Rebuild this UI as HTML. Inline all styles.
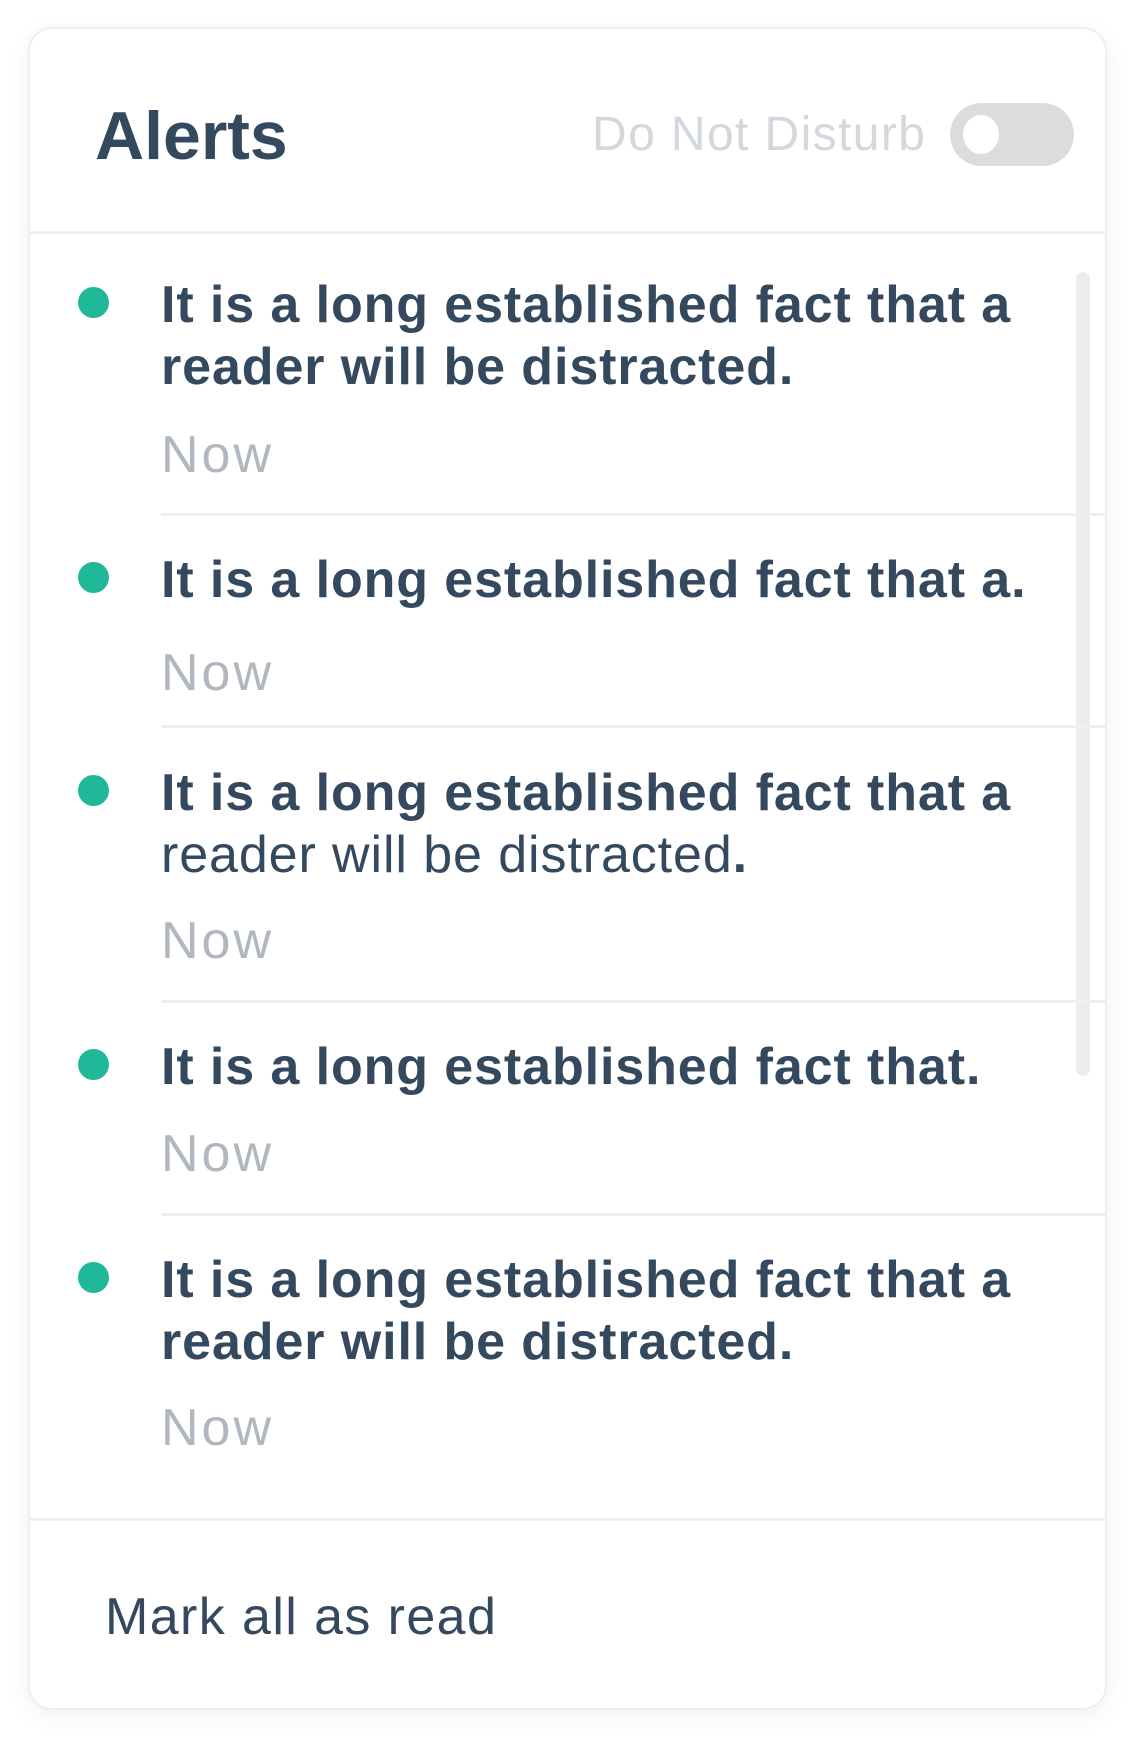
<!DOCTYPE html>
<html><head><meta charset="utf-8"><style>
*{margin:0;padding:0;box-sizing:border-box}
body{width:1134px;height:1737px;background:#fff;position:relative;overflow:hidden;font-family:"Liberation Sans",sans-serif;color:#34495e}
.card{position:absolute;left:28px;top:27px;width:1079px;height:1683px;border:2px solid #efefef;border-radius:24px;background:#fff;box-shadow:0 6px 24px rgba(0,0,0,0.06)}
.t{position:absolute;white-space:nowrap;line-height:1}
.b{font-size:52px;font-weight:bold;left:161px;letter-spacing:0.9px}
.r{font-size:52px;font-weight:normal}
.now{font-size:52px;color:#b0b7bf;left:161px;letter-spacing:3px}
.dot{position:absolute;left:78px;width:31px;height:31px;border-radius:50%;background:#1fb899}
.hr{position:absolute;height:3px;background:#efefef}
</style></head><body>
<div class="card"></div>
<div class="t" style="left:95px;top:102px;font-size:68px;font-weight:bold">Alerts</div>
<div class="t" style="left:592px;top:111px;font-size:48px;color:#d3d8de;letter-spacing:1.4px">Do Not Disturb</div>
<div style="position:absolute;left:950px;top:103px;width:124px;height:63px;border-radius:32px;background:#dcdcdc"></div>
<div style="position:absolute;left:958px;top:110px;width:46px;height:49px;border-radius:50%;background:#fff;border:5px solid #dcdcdc"></div>
<div class="hr" style="left:30px;width:1075px;top:231px"></div>
<div style="position:absolute;left:1076px;top:272px;width:14px;height:804px;border-radius:7px;background:#ececec"></div>

<div class="dot" style="top:287px"></div>
<div class="t b" style="top:279px">It is a long established fact that a</div>
<div class="t b" style="top:341px">reader will be distracted.</div>
<div class="t now" style="top:429px">Now</div>
<div class="hr" style="left:161px;width:944px;top:513px"></div>

<div class="dot" style="top:562px"></div>
<div class="t b" style="top:554px">It is a long established fact that a.</div>
<div class="t now" style="top:647px">Now</div>
<div class="hr" style="left:161px;width:944px;top:725px"></div>

<div class="dot" style="top:775px"></div>
<div class="t b" style="top:767px">It is a long established fact that a</div>
<div class="t b" style="top:829px"><span class="r">reader will be distracted</span>.</div>
<div class="t now" style="top:915px">Now</div>
<div class="hr" style="left:161px;width:944px;top:1000px"></div>

<div class="dot" style="top:1049px"></div>
<div class="t b" style="top:1041px">It is a long established fact that.</div>
<div class="t now" style="top:1128px">Now</div>
<div class="hr" style="left:161px;width:944px;top:1213px"></div>

<div class="dot" style="top:1262px"></div>
<div class="t b" style="top:1254px">It is a long established fact that a</div>
<div class="t b" style="top:1316px">reader will be distracted.</div>
<div class="t now" style="top:1402px">Now</div>
<div class="hr" style="left:30px;width:1075px;top:1518px"></div>

<div class="t" style="left:105px;top:1591px;font-size:52px;letter-spacing:1.4px">Mark all as read</div>
</body></html>
